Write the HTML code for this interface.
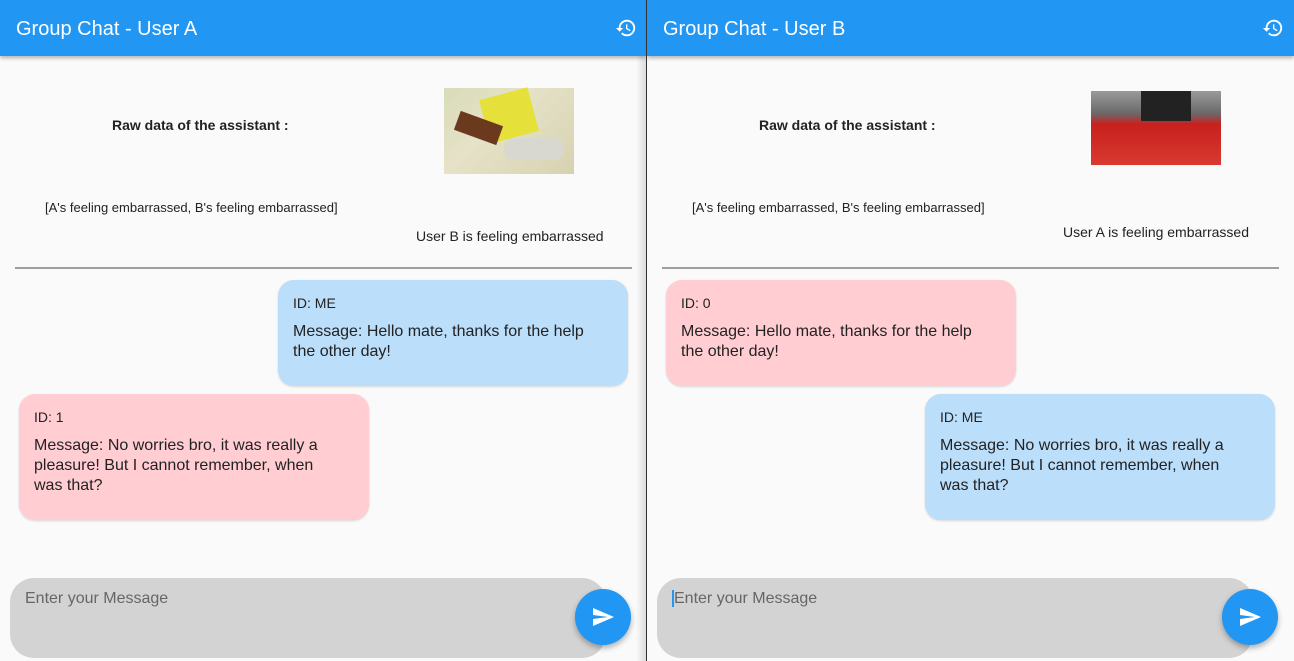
<!DOCTYPE html>
<html><head><style>
*{margin:0;padding:0;box-sizing:border-box}
body{width:1294px;height:661px;background:#fafafa;font-family:"Liberation Sans",sans-serif;position:relative;overflow:hidden;color:#222}
.p{position:absolute;top:0;width:646px;height:661px;background:#fafafa;overflow:hidden}
.bar{position:absolute;left:0;top:0;width:100%;height:56px;background:#2196F3;box-shadow:0 2px 4px rgba(0,0,0,.3)}
.bar .t{position:absolute;left:16px;top:18px;color:#fff;font-size:20px}
.bar svg{position:absolute;left:615px;top:17px}
.a{position:absolute;font-size:14px}
.img{position:absolute}
.hr{position:absolute;left:15px;top:267px;width:617px;height:2px;background:#9e9e9e}
.b{position:absolute;width:350px;border-radius:16px;padding:15px 15px;box-shadow:0 1px 2px rgba(0,0,0,.15)}
.b .id{font-size:14px;margin-bottom:11px}
.b .m{font-size:16px;line-height:20px;padding-right:12px}
.blue{background:#BBDEFB}.pink{background:#FFCDD2}
.in{position:absolute;left:10px;top:578px;width:596px;height:80px;background:#d3d3d3;border-radius:24px;padding:12px 15px;font-size:16px;color:#666}
.fab{position:absolute;left:575px;top:589px;width:56px;height:56px;border-radius:50%;background:#2196F3;box-shadow:0 3px 6px rgba(0,0,0,.3)}
.fab svg{position:absolute;left:16px;top:16px}
</style></head><body>
<div class="p" style="left:0">
<div class="bar"><div class="t">Group Chat - User A</div><svg width="22" height="22" viewBox="0 0 24 24"><path fill="#fff" d="M13 3a9 9 0 0 0-9 9H1l3.89 3.89.07.14L9 12H6c0-3.87 3.13-7 7-7s7 3.13 7 7-3.13 7-7 7c-1.930 0-3.68-.79-4.94-2.06l-1.42 1.42A8.95 8.95 0 0 0 13 21a9 9 0 0 0 0-18zm-1 5v5l4.28 2.54.72-1.21-3.5-2.08V8H12z"/></svg></div>
<div class="a" style="left:112px;top:117px;font-weight:bold;font-size:14px">Raw data of the assistant :</div>
<div class="img" style="left:444px;top:88px;width:130px;height:86px;background:linear-gradient(135deg,#d8dcb8,#e6e2c8 40%,#d6d2b0);"><div style="position:absolute;left:40px;top:5px;width:50px;height:45px;background:#e6e03a;transform:rotate(-15deg)"></div><div style="position:absolute;left:12px;top:30px;width:45px;height:20px;background:#6b3a1e;transform:rotate(20deg)"></div><div style="position:absolute;left:60px;top:50px;width:60px;height:22px;background:#d8d8d0;border-radius:10px"></div></div>
<div class="a" style="left:45px;top:200px;font-size:13px">[A's feeling embarrassed, B's feeling embarrassed]</div>
<div class="a" style="left:416px;top:228px;font-size:14px">User B is feeling embarrassed</div>
<div class="hr"></div>
<div class="b blue" style="left:278px;top:280px;height:106px"><div class="id">ID: ME</div><div class="m">Message: Hello mate, thanks for the help the other day!</div></div>
<div class="b pink" style="left:19px;top:394px;height:126px"><div class="id">ID: 1</div><div class="m">Message: No worries bro, it was really a pleasure! But I cannot remember, when was that?</div></div>
<div class="in">Enter your Message</div>
<div class="fab"><svg width="24" height="24" viewBox="0 0 24 24"><path fill="#fff" d="M2 21l21-9L2 3v7l15 2-15 2z"/></svg></div>
</div>
<div style="position:absolute;left:646px;top:0;width:1px;height:661px;background:#333"></div>
<div style="position:absolute;left:636px;top:56px;width:10px;height:605px;background:linear-gradient(90deg,rgba(0,0,0,0),rgba(0,0,0,.12))"></div>
<div class="p" style="left:647px;width:647px">
<div class="bar"><div class="t">Group Chat - User B</div><svg width="22" height="22" viewBox="0 0 24 24"><path fill="#fff" d="M13 3a9 9 0 0 0-9 9H1l3.89 3.89.07.14L9 12H6c0-3.87 3.13-7 7-7s7 3.13 7 7-3.13 7-7 7c-1.93 0-3.68-.79-4.94-2.06l-1.42 1.42A8.95 8.95 0 0 0 13 21a9 9 0 0 0 0-18zm-1 5v5l4.28 2.54.72-1.21-3.5-2.08V8H12z"/></svg></div>
<div class="a" style="left:112px;top:117px;font-weight:bold">Raw data of the assistant :</div>
<div class="img" style="left:444px;top:91px;width:130px;height:74px;background:linear-gradient(180deg,#9a9a9a,#6a6a6a 30%,#c8201e 45%,#d83a30)"><div style="position:absolute;left:50px;top:0;width:50px;height:30px;background:#222"></div></div>
<div class="a" style="left:45px;top:200px;font-size:13px">[A's feeling embarrassed, B's feeling embarrassed]</div>
<div class="a" style="left:416px;top:224px">User A is feeling embarrassed</div>
<div class="hr"></div>
<div class="b pink" style="left:19px;top:280px;height:106px"><div class="id">ID: 0</div><div class="m">Message: Hello mate, thanks for the help the other day!</div></div>
<div class="b blue" style="left:278px;top:394px;height:126px"><div class="id">ID: ME</div><div class="m">Message: No worries bro, it was really a pleasure! But I cannot remember, when was that?</div></div>
<div class="in"><span style="border-left:2px solid #2196F3"></span>Enter your Message</div>
<div class="fab"><svg width="24" height="24" viewBox="0 0 24 24"><path fill="#fff" d="M2 21l21-9L2 3v7l15 2-15 2z"/></svg></div>
</div>
</body></html>
